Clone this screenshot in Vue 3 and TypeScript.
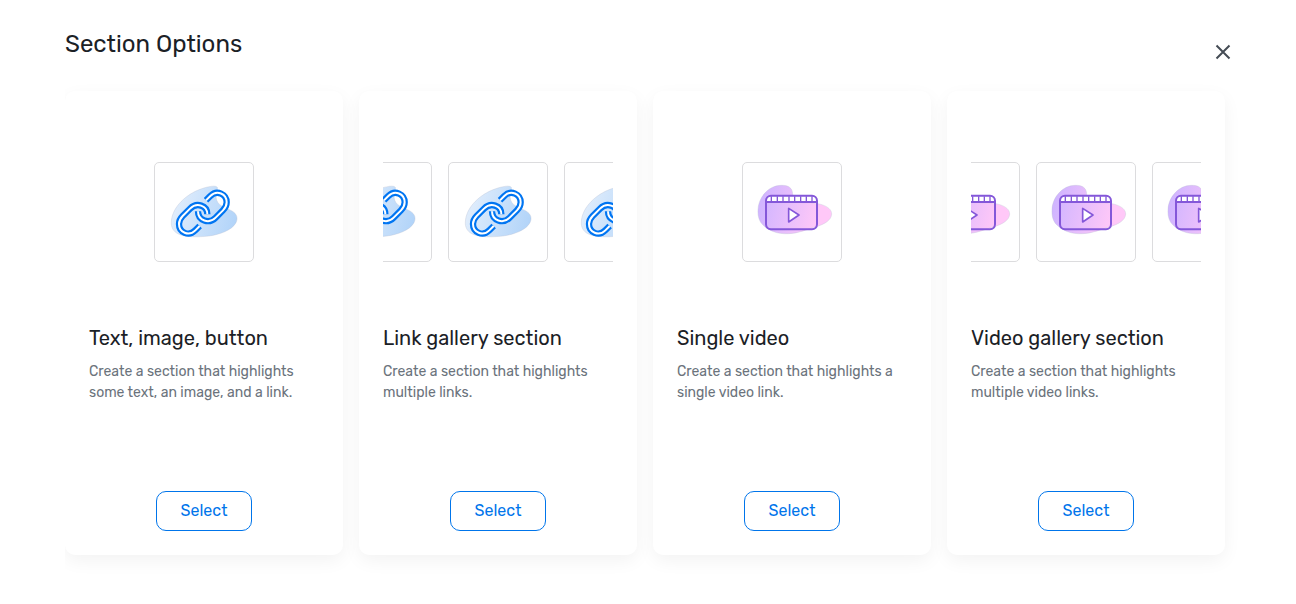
<script setup lang="ts">
type Kind = 'link' | 'video'

interface SectionOption {
  title: string
  description: string
  kind: Kind
  tiles: number
}

const options: SectionOption[] = [
  { title: 'Text, image, button', description: 'Create a section that highlights some text, an image, and a link.', kind: 'link', tiles: 1 },
  { title: 'Link gallery section', description: 'Create a section that highlights multiple links.', kind: 'link', tiles: 3 },
  { title: 'Single video', description: 'Create a section that highlights a single video link.', kind: 'video', tiles: 1 },
  { title: 'Video gallery section', description: 'Create a section that highlights multiple video links.', kind: 'video', tiles: 3 },
]

const dividers = [100, 118, 135, 153, 170, 188, 205, 222]
</script>

<template>
  <main class="page">
    <svg class="defs" aria-hidden="true">
      <defs>
        <linearGradient id="link-fill" x1="0" y1="0.4" x2="1" y2="0.6">
          <stop offset="0" stop-color="#e2eefc" />
          <stop offset="1" stop-color="#b2d4f9" />
        </linearGradient>
        <linearGradient id="video-fill" x1="0" y1="0" x2="1" y2="0.15">
          <stop offset="0.1" stop-color="#d1b5ff" />
          <stop offset="0.9" stop-color="#ffc8f8" />
        </linearGradient>
      </defs>
    </svg>

    <header class="header">
      <h1 class="heading">Section Options</h1>
      <button class="close" type="button" aria-label="Close">
        <svg viewBox="0 0 16 16" aria-hidden="true"><path d="M1.5 1.5 14.5 14.5M14.5 1.5 1.5 14.5" /></svg>
      </button>
    </header>

    <div class="cards">
      <article v-for="option in options" :key="option.title" class="card">
        <div class="preview">
          <div v-for="n in option.tiles" :key="n" class="tile">
            <svg v-if="option.kind === 'link'" viewBox="15 15 294 294" aria-hidden="true">
              <path class="blob" fill="url(#link-fill)" d="M64 192C66 145 112 108 150 94C174 85 198 81 202 88C204 96 197 105 198 117C200 144 226 148 246 159C262 168 264 182 258 194C246 217 207 230 177 234C145 238 105 238 83 227C69 219 63 207 64 192Z" />
              <g class="chain">
                <path class="chain-edge" d="M168 127 181 114C201 94 230 108 230 133C230 143 226 150 219 157L197 179C177 199 144 188 144 160" />
                <path class="chain-core" d="M168 127 181 114C201 94 230 108 230 133C230 143 226 150 219 157L197 179C177 199 144 188 144 160" />
                <path class="chain-edge" d="M149 204 136 217C116 237 87 223 87 198C87 188 91 181 98 174L120 152C140 132 172 142 172 169" />
                <path class="chain-core" d="M149 204 136 217C116 237 87 223 87 198C87 188 91 181 98 174L120 152C140 132 172 142 172 169" />
              </g>
            </svg>
            <svg v-else viewBox="15 15 294 294" aria-hidden="true">
              <path class="blob" fill="url(#video-fill)" d="M60 155C61 119 91 82 130 82C151 81 164 90 164 109C165 133 184 135 205 134C237 133 281 143 281 168C280 188 257 199 235 206C206 214 183 226 151 227C116 229 91 217 75 201C63 190 59 174 60 155Z" />
              <path class="film" d="M85 132V128Q85 114 100 114H222Q237 114 237 128V132Z" />
              <rect class="frame" x="84" y="113" width="153" height="101" rx="15" />
              <path class="frame" d="M84 132H237" />
              <path v-for="x in dividers" :key="x" class="divider" :d="`M${x} 115V131`" />
              <path class="play" d="M152 151V192L183 171Z" />
            </svg>
          </div>
        </div>
        <h2 class="title">{{ option.title }}</h2>
        <p class="description">{{ option.description }}</p>
        <button class="select" type="button" :aria-label="`Select ${option.title}`">Select</button>
      </article>
    </div>
  </main>
</template>

<style>
body {
  margin: 0;
  background: #fff;
}
</style>

<style scoped>
.page {
  box-sizing: border-box;
  padding: 28px 65px 0;
  font-family: Rubik, Roboto, "Liberation Sans", sans-serif;
  color: #1b2126;
}
.defs {
  position: absolute;
  width: 0;
  height: 0;
}
.header {
  display: flex;
  justify-content: space-between;
  align-items: flex-start;
}
.heading {
  margin: 0;
  font-size: 24px;
  line-height: 32px;
  font-weight: 400;
}
.close {
  display: flex;
  margin-top: 16px;
  padding: 0;
  border: 0;
  background: none;
  cursor: pointer;
}
.close svg {
  width: 16px;
  height: 16px;
  fill: none;
  stroke: #454c55;
  stroke-width: 2;
}
.cards {
  display: grid;
  grid-template-columns: repeat(4, minmax(0, 1fr));
  gap: 16px;
  margin-right: -65px;
  padding: 31px 71px 48px 0;
  overflow: hidden;
}
.card {
  display: flex;
  flex-direction: column;
  box-sizing: border-box;
  min-height: 464px;
  padding: 24px;
  border-radius: 10px;
  background: #fff;
  box-shadow: 0 6px 18px rgba(0, 0, 0, 0.05);
}
.preview {
  display: flex;
  justify-content: center;
  align-items: center;
  gap: 16px;
  height: 194px;
  overflow: hidden;
}
.tile {
  box-sizing: border-box;
  flex: none;
  width: 100px;
  height: 100px;
  border: 1px solid #dcdcde;
  border-radius: 5px;
}
.tile svg {
  display: block;
  width: 100%;
  height: 100%;
}
.blob {
  stroke: #b9bfd0;
  stroke-width: 1;
}
.chain {
  fill: none;
}
.chain-edge {
  stroke: #0075f2;
  stroke-width: 19;
}
.chain-core {
  stroke: #fff;
  stroke-width: 6;
}
.film {
  fill: #fff;
}
.frame,
.divider,
.play {
  fill: none;
  stroke: #8457d9;
  stroke-width: 6;
  stroke-linejoin: round;
}
.divider {
  stroke-width: 4;
}
.play {
  fill: #fff;
  stroke-width: 5;
}
.title {
  margin: 16px 0 0;
  font-size: 20px;
  line-height: 26px;
  font-weight: 400;
}
.description {
  margin: 10px 0 24px;
  font-size: 14px;
  line-height: 21px;
  color: #6b737c;
}
.select {
  align-self: center;
  box-sizing: border-box;
  width: 96px;
  height: 40px;
  margin-top: auto;
  padding: 0 0 2px;
  border: 1px solid #0075eb;
  border-radius: 10px;
  background: #fff;
  color: #0075eb;
  font: inherit;
  font-size: 16px;
  cursor: pointer;
}
</style>
